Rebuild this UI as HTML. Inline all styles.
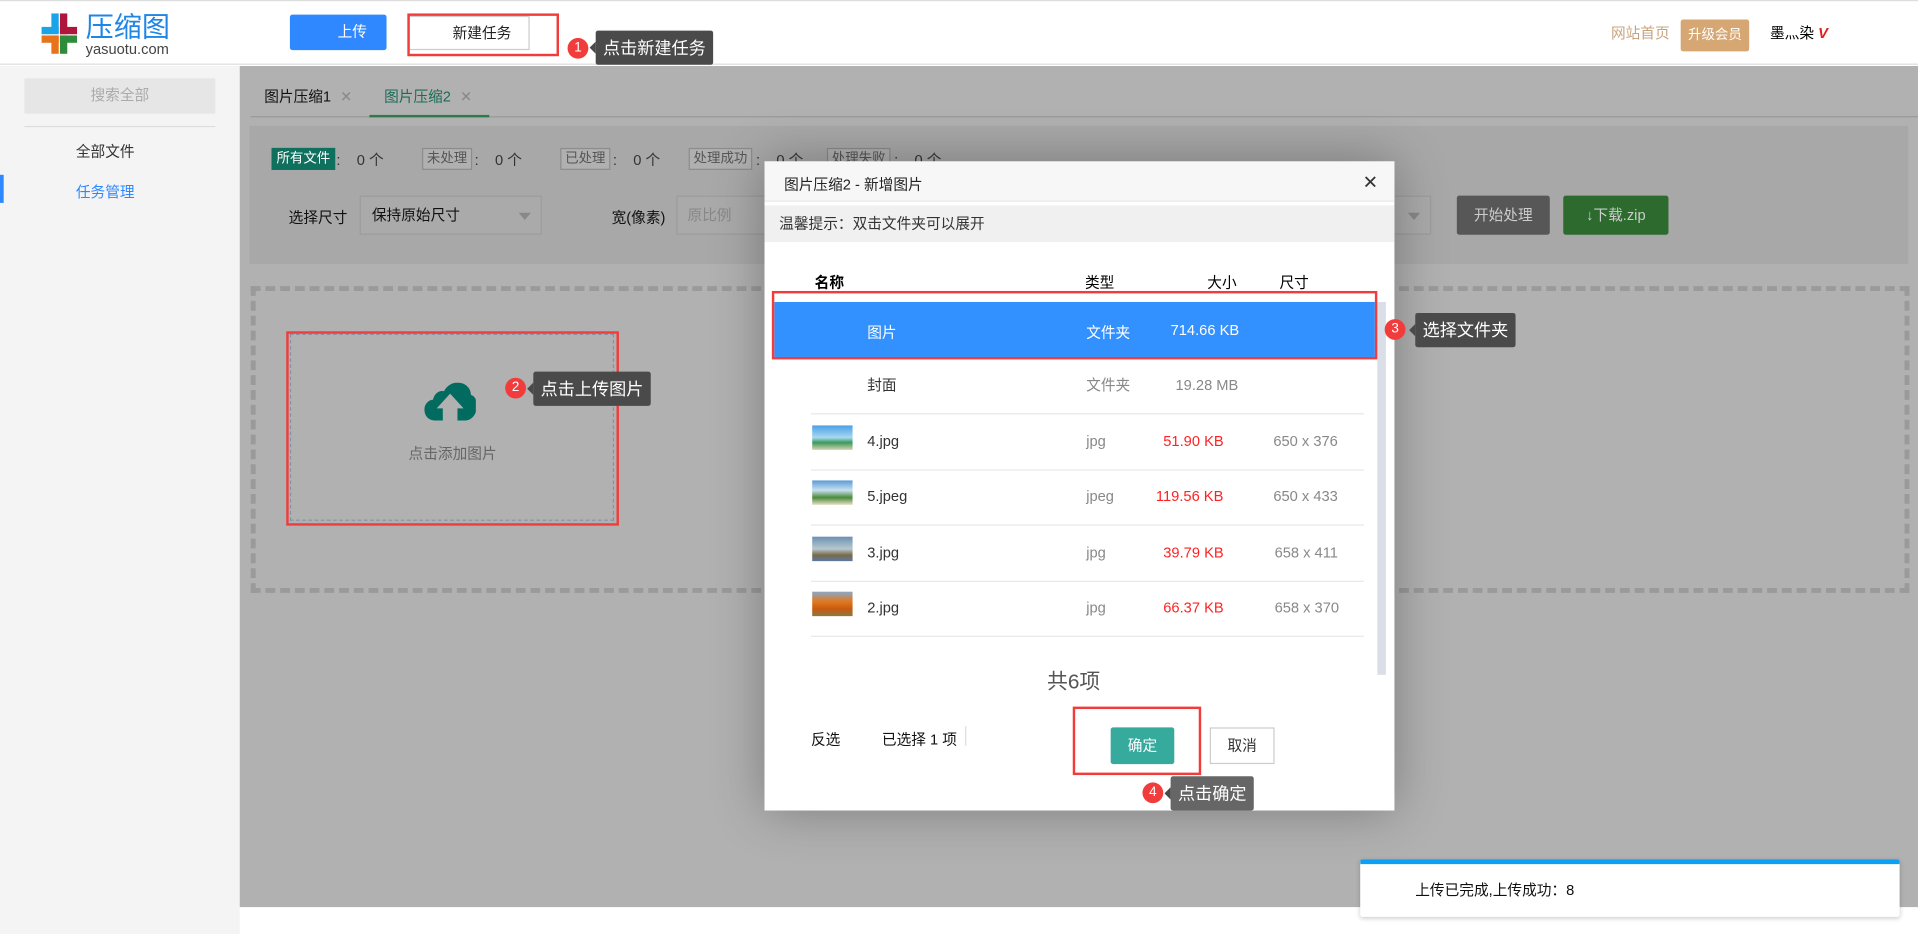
<!DOCTYPE html>
<html><head><meta charset="utf-8"><style>
*{margin:0;padding:0;box-sizing:border-box}
body{width:1918px;height:934px;overflow:hidden;background:#fff;font-family:"Liberation Sans","Noto Sans CJK SC",sans-serif;}
#s{position:absolute;left:0;top:0;width:1568px;height:764px;transform:scale(1.2232,1.2225);transform-origin:0 0;font-size:12px;color:#333}
.a{position:absolute}
.tag{position:absolute;top:121px;height:18px;line-height:16px;padding:0 3px;border:1px solid #8c8c8c;color:#555;font-size:11px;background:#b0b0b0}
.cnt{position:absolute;top:122px;font-size:12px;color:#333}
.row{position:absolute;left:663px;width:452px;height:46px;border-bottom:1px solid #e8e8e8;font-size:12px}
.row span{position:absolute;top:0;line-height:45px}
.tip{position:absolute;background:#4a4a4a;color:#fff;font-size:14px;height:28px;line-height:28px;padding:0 6px;border-radius:2px}
.tip:before{content:"";position:absolute;left:-5px;top:9px;border:5px solid transparent;border-left:0;border-right-color:#4a4a4a}
.bd{position:absolute;width:17px;height:17px;border-radius:50%;background:#f23c3c;color:#fff;font-size:11px;text-align:center;line-height:17px}
.red{position:absolute;border:2px solid #f23c3c}
.th{position:absolute;width:33px;height:20px}
</style></head><body><div id="s">
<div class="a" style="left:0;top:0;width:1568px;height:53px;background:#fff;border-bottom:1px solid #ddd"></div>
<div class="a" style="left:0;top:0;width:1568px;height:1px;background:#ddd"></div>
<svg class="a" style="left:30px;top:10px" width="48" height="36" viewBox="0 0 48 36">
<rect x="12" y="1" width="6" height="16" fill="#1aa3e8"/><rect x="4" y="12" width="14" height="6" fill="#1aa3e8"/>
<rect x="19" y="1" width="6" height="17" fill="#b0163b"/><rect x="19" y="12" width="14" height="6" fill="#b0163b"/>
<rect x="4" y="19" width="14" height="6" fill="#e8731a"/><rect x="12" y="19" width="6" height="15" fill="#e8731a"/>
<rect x="19" y="19" width="14" height="6" fill="#2e8b3a"/><rect x="19" y="19" width="6" height="15" fill="#2e8b3a"/>
</svg>
<div class="a" style="left:70px;top:9px;font-size:23px;color:#1f86e6;line-height:26px">压缩图</div>
<div class="a" style="left:70px;top:33px;font-size:12px;color:#444">yasuotu.com</div>
<div class="a" style="left:237px;top:12px;width:79px;height:29px;background:#2f88ff;color:#fff;text-align:right;padding-right:16px;line-height:29px;font-size:12px;border-radius:2px">上传</div>
<div class="a" style="left:334px;top:13px;width:99px;height:28px;background:#fff;border:1px solid #ccc;line-height:27px;padding-left:35px;font-size:12px;color:#222">新建任务</div>
<div class="red" style="left:333px;top:11px;width:124px;height:35px"></div>
<div class="bd" style="left:464px;top:31px">1</div>
<div class="tip" style="left:487px;top:25px;color:#fff">点击新建任务</div>
<div class="a" style="left:1317px;top:18px;color:#c9a37c;font-size:12px">网站首页</div>
<div class="a" style="left:1374px;top:16px;width:56px;height:26px;background:#d7a773;color:#fff;font-size:11px;line-height:26px;text-align:center;border-radius:2px">升级会员</div>
<div class="a" style="left:1447px;top:18px;color:#000;font-size:12px">墨灬染 <span style="color:#e02020;font-weight:bold;font-style:italic">V</span></div>
<div class="a" style="left:0;top:54px;width:196px;height:710px;background:#f4f4f4"></div>
<div class="a" style="left:20px;top:64px;width:156px;height:29px;background:#e6e6e6;color:#aaa;text-align:center;line-height:29px">搜索全部</div>
<div class="a" style="left:20px;top:103px;width:156px;height:1px;background:#ddd"></div>
<div class="a" style="left:62px;top:115px;color:#333">全部文件</div>
<div class="a" style="left:62px;top:148px;color:#2f88ff">任务管理</div>
<div class="a" style="left:0;top:143px;width:3px;height:23px;background:#2f88ff"></div>
<div class="a" style="left:196px;top:54px;width:1372px;height:688px;background:#b1b1b1"></div>
<div class="a" style="left:216px;top:70px;color:#111">图片压缩1 <span style="color:#888;margin-left:4px">✕</span></div>
<div class="a" style="left:314px;top:70px;color:#1d6b55">图片压缩2 <span style="color:#888;margin-left:4px">✕</span></div>
<div class="a" style="left:205px;top:95px;width:1363px;height:1px;background:#999"></div>
<div class="a" style="left:302px;top:94px;width:98px;height:2px;background:#2f7a4a"></div>
<div class="a" style="left:204px;top:103px;width:1356px;height:113px;background:#a8a8a8"></div>
<div class="tag" style="left:222px;background:#10705e;color:#fff;border-color:#10705e">所有文件</div><div class="cnt" style="left:275px">:&nbsp;&nbsp;&nbsp; 0 个</div>
<div class="tag" style="left:345px">未处理</div><div class="cnt" style="left:388px">:&nbsp;&nbsp;&nbsp; 0 个</div>
<div class="tag" style="left:458px">已处理</div><div class="cnt" style="left:501px">:&nbsp;&nbsp;&nbsp; 0 个</div>
<div class="tag" style="left:563px">处理成功</div><div class="cnt" style="left:618px">:&nbsp;&nbsp;&nbsp; 0 个</div>
<div class="tag" style="left:676px">处理失败</div><div class="cnt" style="left:731px">:&nbsp;&nbsp;&nbsp; 0 个</div>
<div class="a" style="left:236px;top:169px;color:#111">选择尺寸</div>
<div class="a" style="left:294px;top:160px;width:149px;height:32px;background:#aaa;border:1px solid #9c9c9c;line-height:30px;padding-left:9px;color:#111">保持原始尺寸<span style="position:absolute;right:8px;top:13px;border:5px solid transparent;border-top:6px solid #888"></span></div>
<div class="a" style="left:500px;top:169px;color:#111">宽(像素)</div>
<div class="a" style="left:553px;top:160px;width:120px;height:32px;background:#aaa;border:1px solid #9c9c9c;line-height:30px;padding-left:8px;color:#888">原比例</div>
<div class="a" style="left:1110px;top:160px;width:60px;height:32px;background:#aaa;border:1px solid #9c9c9c"><span style="position:absolute;right:8px;top:13px;border:5px solid transparent;border-top:6px solid #888"></span></div>
<div class="a" style="left:1191px;top:160px;width:76px;height:32px;background:#575757;color:#ccc;text-align:center;line-height:32px;border-radius:2px">开始处理</div>
<div class="a" style="left:1278px;top:160px;width:86px;height:32px;background:#2c6a2e;color:#ccc;text-align:center;line-height:32px;border-radius:2px">&#8595;下载.zip</div>
<div class="a" style="left:205px;top:234px;width:1356px;height:251px;border:4px dashed #9a9a9a"></div>
<div class="a" style="left:237px;top:273px;width:265px;height:153px;border:1px dashed #7f94a8"></div>
<div class="red" style="left:234px;top:271px;width:272px;height:159px"></div>
<svg class="a" style="left:347px;top:313px" width="42" height="32" viewBox="0 0 42 32"><path d="M9 31C3 31 0 27 0 22c0-5 4-8 7-8 1-5 5-8 9-7 2-4 6-7 11-7 7 0 11 5 11 10 3 1 5 4 5 9 0 6-4 12-10 12h-6V21h5L21 9 10 21h5v10z" fill="#006b5e"/></svg>
<div class="a" style="left:334px;top:362px;color:#666">点击添加图片</div>
<div class="bd" style="left:413px;top:309px">2</div>
<div class="tip" style="left:436px;top:304px">点击上传图片</div>
<div class="a" style="left:625px;top:132px;width:515px;height:531px;background:#fff;box-shadow:0 0 40px rgba(0,0,0,.3)"></div>
<div class="a" style="left:625px;top:132px;width:515px;height:33px;background:#f7f7f7;border-bottom:1px solid #e8e8e8"></div>
<div class="a" style="left:641px;top:142px;color:#222">图片压缩2 - 新增图片</div>
<div class="a" style="left:1114px;top:140px;font-size:15px;color:#333">✕</div>
<div class="a" style="left:625px;top:168px;width:515px;height:30px;background:#f0f0f0;line-height:30px;padding-left:12px;color:#333">温馨提示：双击文件夹可以展开</div>
<div class="a" style="left:666px;top:222px;font-weight:bold;color:#000;font-size:12px">名称</div>
<div class="a" style="left:887px;top:222px;color:#000">类型</div>
<div class="a" style="left:987px;top:222px;color:#000">大小</div>
<div class="a" style="left:1046px;top:222px;color:#000">尺寸</div>
<div class="a" style="left:1126px;top:247px;width:7px;height:305px;background:#d9dee7"></div>
<div class="a" style="left:633px;top:247px;width:491px;height:45px;background:#3390ff"></div>
<div class="a" style="left:709px;top:263px;color:#fff">图片</div>
<div class="a" style="left:888px;top:263px;color:#fff">文件夹</div>
<div class="a" style="left:957px;top:263px;color:#fff">714.66 KB</div>
<div class="red" style="left:631px;top:238px;width:495px;height:56px"></div>
<div class="bd" style="left:1132px;top:261px">3</div>
<div class="tip" style="left:1157px;top:256px">选择文件夹</div>
<div class="row" style="top:293px"><span style="left:46px">封面</span><span style="left:225px;color:#888">文件夹</span><span style="left:298px;color:#888">19.28 MB</span></div>
<div class="row" style="top:339px"><div class="th" style="left:1px;top:9px;background:linear-gradient(#4aa0e6,#a8d8f0 50%,#3a9a5a 70%,#d8d0b0)"></div><span style="left:46px">4.jpg</span><span style="left:225px;color:#888">jpg</span><span style="left:288px;color:#f22">51.90 KB</span><span style="left:378px;color:#888">650 x 376</span></div>
<div class="row" style="top:384px"><div class="th" style="left:1px;top:9px;background:linear-gradient(#5a9ad6,#c8e0f0 40%,#4a8a3a 70%,#e8e0c8)"></div><span style="left:46px">5.jpeg</span><span style="left:225px;color:#888">jpeg</span><span style="left:282px;color:#f22">119.56 KB</span><span style="left:378px;color:#888">650 x 433</span></div>
<div class="row" style="top:430px"><div class="th" style="left:1px;top:9px;background:linear-gradient(#6a90b0,#b8c8d0 50%,#7a6a4a 75%,#5a7aa0)"></div><span style="left:46px">3.jpg</span><span style="left:225px;color:#888">jpg</span><span style="left:288px;color:#f22">39.79 KB</span><span style="left:379px;color:#888">658 x 411</span></div>
<div class="row" style="top:475px"><div class="th" style="left:1px;top:9px;background:linear-gradient(#8aa8c8,#e07a20 40%,#c85a10 70%,#8a7a40)"></div><span style="left:46px">2.jpg</span><span style="left:225px;color:#888">jpg</span><span style="left:288px;color:#f22">66.37 KB</span><span style="left:379px;color:#888">658 x 370</span></div>
<div class="a" style="left:856px;top:543px;font-size:17px;color:#555">共6项</div>
<div class="a" style="left:663px;top:596px;color:#111">反选</div>
<div class="a" style="left:721px;top:596px;color:#111">已选择 1 项</div>
<div class="a" style="left:789px;top:594px;width:1px;height:16px;background:#ddd"></div>
<div class="a" style="left:908px;top:595px;width:52px;height:30px;background:#35aa9d;color:#fff;text-align:center;line-height:30px;border-radius:2px">确定</div>
<div class="a" style="left:989px;top:595px;width:53px;height:30px;border:1px solid #ccc;color:#333;text-align:center;line-height:28px">取消</div>
<div class="red" style="left:877px;top:578px;width:105px;height:56px"></div>
<div class="bd" style="left:934px;top:640px">4</div>
<div class="tip" style="left:957px;top:635px;background:#666">点击确定</div>
<div class="a" style="left:1112px;top:703px;width:441px;height:47px;background:#fff;border-top:4px solid #0aa0f5;box-shadow:0 1px 4px rgba(0,0,0,.2);border-radius:2px;padding:12px 0 0 45px;color:#111">上传已完成,上传成功：8</div>
</div></body></html>
